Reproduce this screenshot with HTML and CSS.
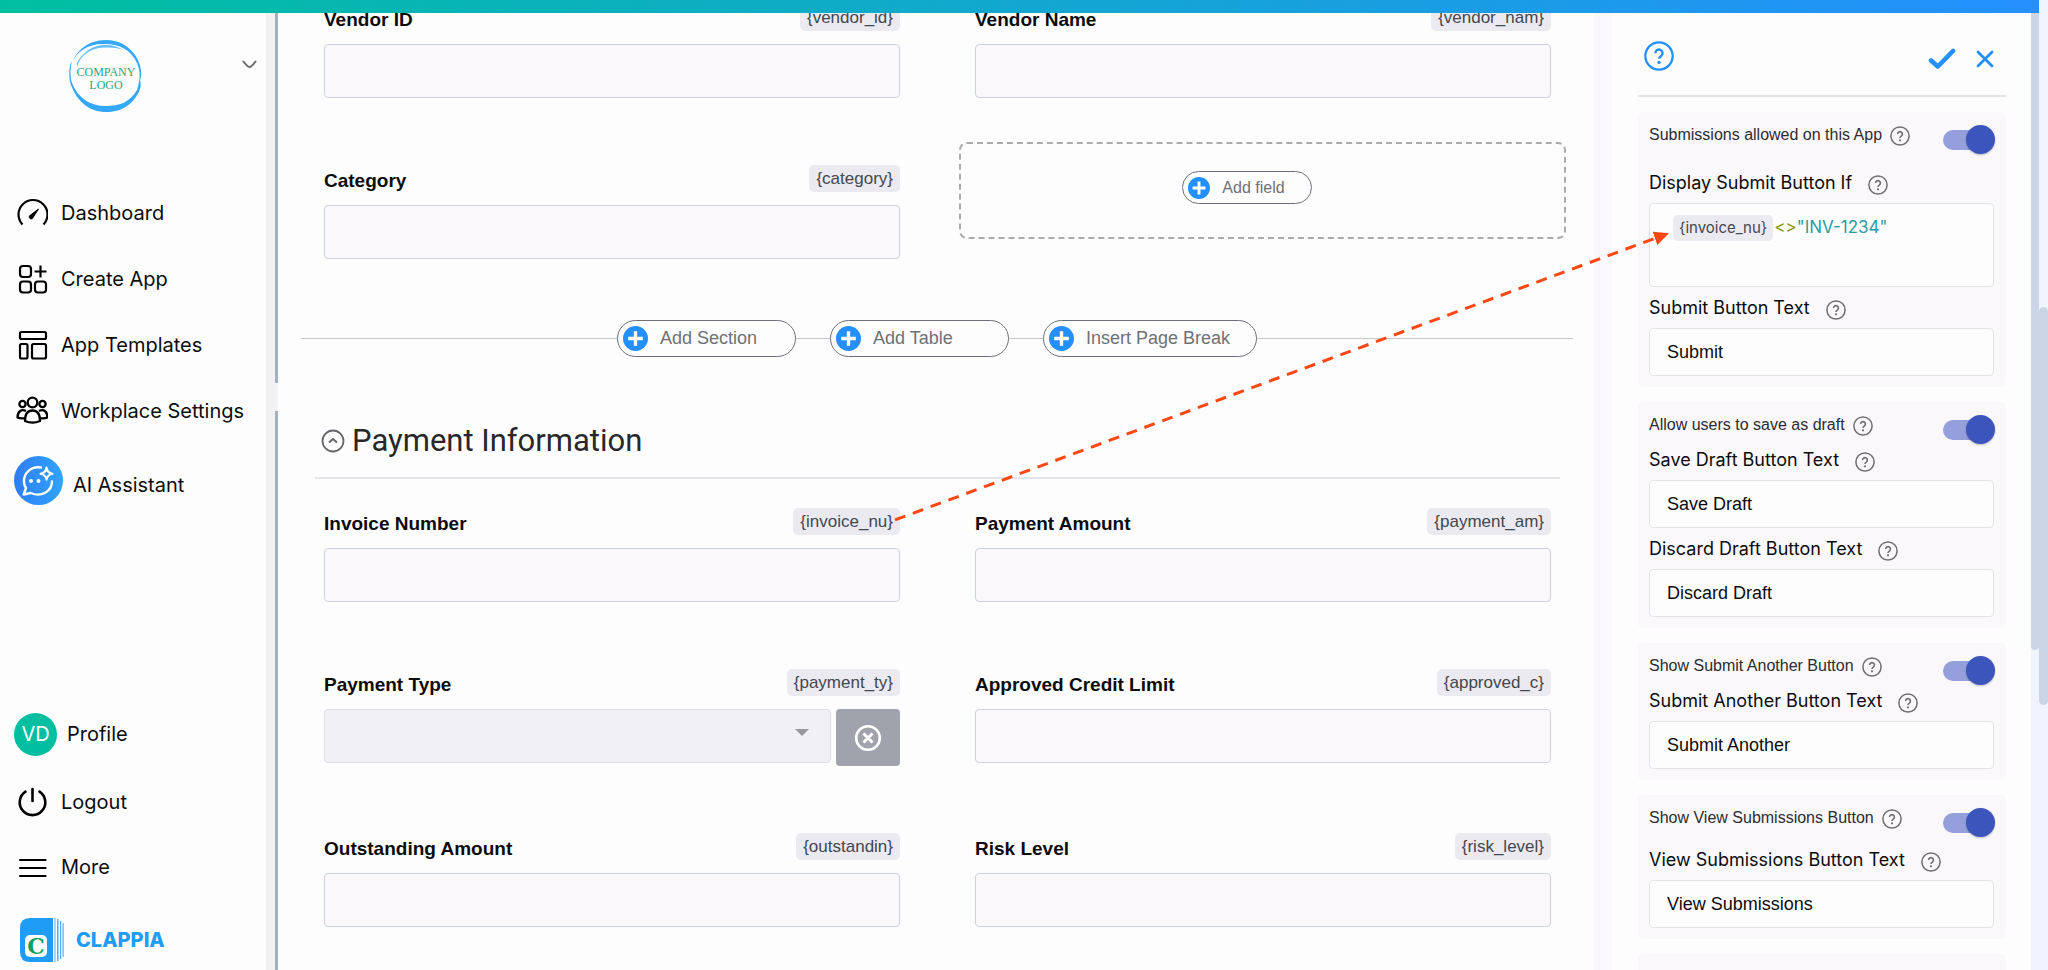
FILE: index.html
```html
<!DOCTYPE html>
<html lang="en">
<head>
    <meta charset="UTF-8">
    <meta name="viewport" content="width=device-width, initial-scale=1.0">
    <title>Clappia - Edit App</title>
    <link rel="stylesheet" href="styles.css">
</head>
<body>
    <!-- shared icons -->
    <svg class="sprite" aria-hidden="true">
        <symbol id="i-help" viewBox="0 0 20 20">
            <circle cx="10" cy="10" r="9.1" fill="none" stroke="currentColor" stroke-width="1.5"/>
            <path d="M7.6 8.1a2.4 2.4 0 1 1 3.7 2c-.9.6-1.3 1-1.3 1.8" fill="none" stroke="currentColor" stroke-width="1.6"/>
            <circle cx="10" cy="14.3" r="1.1" fill="currentColor"/>
        </symbol>
        <symbol id="i-plus" viewBox="0 0 24 24">
            <circle cx="12" cy="12" r="12" fill="#2490ff"/>
            <path d="M12 5v14M5 12h14" fill="none" stroke="#fff" stroke-width="3.2"/>
        </symbol>
    </svg>

    <div class="topbar"></div>

    <div class="app">
        <aside class="sidebar">
            <div class="workspace">
                <svg class="company-logo" width="74" height="74" viewBox="0 0 74 74">
                    <path d="M37 1C18 1 7 13 4 22 8 13 18 5 34 5 48 4 62 10 68 24 72 33 71 42 68 51 60 64 50 67 37 67 21 67 9 59 3 44 1 38 1 30 3 22-1 28 0 41 2 46 8 63 21 73 37 73 52 73 65 66 71 50 72 46 72 44 71 41 74 34 71 25 68 19 61 7 50 1 37 1Z" fill="#34a8fb"/>
                    <path d="M8 24C14 12 26 5 38 6 44 6 50 8 54 11 46 8 34 8 26 10 17 13 11 18 8 28Z" fill="#34a8fb" opacity=".75"/>
                    <text x="37" y="37" text-anchor="middle">COMPANY</text>
                    <text x="37" y="50" text-anchor="middle">LOGO</text>
                </svg>
                <button class="icon-btn workspace-toggle" aria-label="Switch workplace">
                    <svg width="15" height="9" viewBox="0 0 15 9"><path d="M1.5 1.5q4 5.5 6 5.500t6-5.500" fill="none" stroke="#6b6b70" stroke-width="2" stroke-linecap="round"/></svg>
                </button>
            </div>

            <nav class="nav">
                <a class="nav-item" href="#">
                    <svg width="32" height="32" viewBox="0 0 32 32" fill="none" stroke="#000" stroke-width="2">
                        <path d="M6.500 27.500A14.500 14.500 0 1 1 27.500 27.500" stroke-width="2.200"/>
                        <path d="M22.500 12l-5.300 8.300a2 2 0 1 1-2.600-2.300z" fill="#000" stroke-width="1"/>
                    </svg>
                    <span>Dashboard</span>
                </a>
                <a class="nav-item" href="#">
                    <svg width="32" height="32" viewBox="0 0 32 32" fill="none" stroke="#000" stroke-width="2.200">
                        <rect x="4" y="3" width="11" height="11" rx="3"/>
                        <rect x="4" y="18.500" width="11" height="11" rx="3"/>
                        <rect x="19" y="18.500" width="11" height="11" rx="3"/>
                        <path d="M24.500 2.500v12M18.500 8.500h12"/>
                    </svg>
                    <span>Create App</span>
                </a>
                <a class="nav-item" href="#">
                    <svg width="32" height="32" viewBox="0 0 32 32" fill="none" stroke="#000" stroke-width="2.200">
                        <rect x="4" y="3" width="26" height="7" rx="1.500"/>
                        <rect x="4" y="15" width="7.500" height="14.500" rx="1.500"/>
                        <rect x="16" y="15" width="14" height="14.500" rx="1.500"/>
                    </svg>
                    <span>App Templates</span>
                </a>
                <a class="nav-item" href="#">
                    <svg width="32" height="32" viewBox="0 0 32 32" fill="none" stroke="#000" stroke-width="2.300" stroke-linejoin="round">
                        <circle cx="16.500" cy="7.500" r="4.800"/>
                        <circle cx="6.500" cy="9" r="3.100"/>
                        <circle cx="26.500" cy="9" r="3.100"/>
                        <path d="M9 26c0-7 2.500-10.500 7.500-10.500s7.500 3.500 7.500 10.500c-4.500 2-10.500 2-15 0z"/>
                        <path d="M10 16c-5-2.500-8.500 1-8.500 6.500 2 .800 4.500 1 7 .600M23 16c5-2.500 8.500 1 8.500 6.500-2 .800-4.500 1-7 .600"/>
                    </svg>
                    <span>Workplace Settings</span>
                </a>
                <a class="nav-item nav-ai" href="#">
                    <svg width="49" height="49" viewBox="0 0 49 49" fill="none">
                        <defs><linearGradient id="ai" x1="0" x2="1"><stop stop-color="#2f7df6"/><stop offset="1" stop-color="#2fa4fb"/></linearGradient></defs>
                        <circle cx="24.500" cy="24.500" r="24.500" fill="url(#ai)"/>
                        <path d="M27 11.500C17 10 9.500 17 10 26c.1 2 .8 4.300 2 6l-2.300 6.500 7-1.500C27 41.500 38 35.500 38 25.500" stroke="#fff" stroke-width="2.400" stroke-linecap="round" stroke-linejoin="round"/>
                        <path d="M32.500 11.500q.8 5.500 6 6.200-5.200.8-6 6-.8-5.200-6-6 5.200-.7 6-6.200z" stroke="#fff" stroke-width="2" stroke-linejoin="round"/>
                        <circle cx="17" cy="25" r="2" fill="#fff"/>
                        <circle cx="24.500" cy="25" r="2" fill="#fff"/>
                    </svg>
                    <span>AI Assistant</span>
                </a>
            </nav>

            <nav class="nav nav-bottom">
                <a class="nav-item nav-profile" href="#"><b class="avatar">VD</b><span>Profile</span></a>
                <a class="nav-item" href="#">
                    <svg width="32" height="32" viewBox="0 0 32 32" fill="none" stroke="#000" stroke-width="2.600" stroke-linecap="round">
                        <path d="M16.500 3v12M9.500 5.600a12.800 12.800 0 1 0 14 0"/>
                    </svg>
                    <span>Logout</span>
                </a>
                <a class="nav-item nav-more" href="#">
                    <svg width="32" height="32" viewBox="0 0 32 32" fill="none" stroke="#000" stroke-width="2.200" stroke-linecap="round">
                        <path d="M4 9h25.500M4 17h25.500M4 25h25.500"/>
                    </svg>
                    <span>More</span>
                </a>
            </nav>
            <a class="brand" href="#">
                <svg width="44" height="44" viewBox="0 0 44 44">
                    <path d="M10 0H33V44H10Q0 44 0 34V10Q0 0 10 0Z" fill="#1f9cf5"/>
                    <path d="M34.500 0h1v44h-1zM37 1h1.500v42h-1.500zM40 3h1.200v38h-1.200zM42.500 5h1.200v34h-1.200z" fill="#4fb0f7"/>
                    <rect x="5" y="17" width="22" height="22" rx="5" fill="#fff"/>
                    <text x="16" y="36" text-anchor="middle" font-size="22">C</text>
                </svg>
                <span>CLAPPIA</span>
            </a>
        </aside>

        <main class="builder">
            <div class="rail">
                <div class="rail-part rail-top"></div>
                <div class="rail-part rail-rest"></div>
            </div>

            <form class="form">
                <div class="fields">
                    <div class="field">
                        <div class="field-head"><label for="vendor-id">Vendor ID</label><code>{vendor_id}</code></div>
                        <input type="text" id="vendor-id">
                    </div>
                    <div class="field">
                        <div class="field-head"><label for="vendor-name">Vendor Name</label><code>{vendor_nam}</code></div>
                        <input type="text" id="vendor-name">
                    </div>
                    <div class="field">
                        <div class="field-head"><label for="category">Category</label><code>{category}</code></div>
                        <input type="text" id="category">
                    </div>
                    <div class="drop-zone">
                        <button type="button" class="pill pill-small"><svg><use href="#i-plus"/></svg>Add field</button>
                    </div>
                </div>

                <div class="inserts">
                    <button type="button" class="pill"><svg><use href="#i-plus"/></svg>Add Section</button>
                    <button type="button" class="pill"><svg><use href="#i-plus"/></svg>Add Table</button>
                    <button type="button" class="pill"><svg><use href="#i-plus"/></svg>Insert Page Break</button>
                </div>

                <div class="section-head">
                    <button type="button" class="icon-btn" aria-label="Collapse section">
                        <svg width="24" height="24" viewBox="0 0 24 24" fill="none" stroke="#66666b">
                            <circle cx="12" cy="12" r="10.500" stroke-width="1.800"/>
                            <path d="M8 13.500l4-3.500 4 3.500" stroke-width="2"/>
                        </svg>
                    </button>
                    <h2>Payment Information</h2>
                </div>

                <div class="fields">
                    <div class="field">
                        <div class="field-head"><label for="invoice-number">Invoice Number</label><code>{invoice_nu}</code></div>
                        <input type="text" id="invoice-number">
                    </div>
                    <div class="field">
                        <div class="field-head"><label for="payment-amount">Payment Amount</label><code>{payment_am}</code></div>
                        <input type="text" id="payment-amount">
                    </div>
                    <div class="field">
                        <div class="field-head"><label for="payment-type">Payment Type</label><code>{payment_ty}</code></div>
                        <div class="select-row">
                            <div class="select"><select id="payment-type"><option></option></select></div>
                            <button type="button" class="clear-btn" aria-label="Clear selection">
                                <svg width="28" height="28" viewBox="0 0 28 28" fill="none" stroke="#fff" stroke-width="2.600">
                                    <circle cx="14" cy="14" r="11.800"/>
                                    <path d="M9.500 9.500l9 9M18.500 9.500l-9 9" stroke-width="3"/>
                                </svg>
                            </button>
                        </div>
                    </div>
                    <div class="field">
                        <div class="field-head"><label for="credit-limit">Approved Credit Limit</label><code>{approved_c}</code></div>
                        <input type="text" id="credit-limit">
                    </div>
                    <div class="field">
                        <div class="field-head"><label for="outstanding">Outstanding Amount</label><code>{outstandin}</code></div>
                        <input type="text" id="outstanding">
                    </div>
                    <div class="field">
                        <div class="field-head"><label for="risk-level">Risk Level</label><code>{risk_level}</code></div>
                        <input type="text" id="risk-level">
                    </div>
                </div>
            </form>
        </main>

        <aside class="settings">
            <div class="settings-bar">
                <button class="icon-btn" aria-label="Help"><svg width="30" height="30"><use href="#i-help"/></svg></button>
                <div class="settings-actions">
                    <button class="icon-btn" aria-label="Save">
                        <svg width="28" height="22" viewBox="0 0 28 22"><path d="M3 12.500l6.800 6L25 3" fill="none" stroke="#2490ff" stroke-width="4.600" stroke-linecap="round" stroke-linejoin="round"/></svg>
                    </button>
                    <button class="icon-btn" aria-label="Close">
                        <svg width="18" height="18" viewBox="0 0 18 18"><path d="M2 2l14 14M16 2L2 16" fill="none" stroke="#2490ff" stroke-width="2.800" stroke-linecap="round"/></svg>
                    </button>
                </div>
            </div>

            <section class="card">
                <div class="card-head card-head-tall">
                    <label for="allow-submit">Submissions allowed on this App</label>
                    <button class="help" aria-label="Help"><svg><use href="#i-help"/></svg></button>
                    <input type="checkbox" class="toggle" id="allow-submit" checked>
                </div>
                <div class="setting-label">
                    <span id="submit-if">Display Submit Button If</span>
                    <button class="help" aria-label="Help"><svg><use href="#i-help"/></svg></button>
                </div>
                <div class="formula" role="textbox" contenteditable="true" spellcheck="false" aria-labelledby="submit-if"><code>{invoice_nu}</code><span class="op">&lt;&gt;</span><span class="str">"INV-1234"</span></div>
                <div class="setting-label">
                    <label for="submit-text">Submit Button Text</label>
                    <button class="help" aria-label="Help"><svg><use href="#i-help"/></svg></button>
                </div>
                <input type="text" class="setting-input" id="submit-text" value="Submit">
            </section>

            <section class="card">
                <div class="card-head">
                    <label for="allow-draft">Allow users to save as draft</label>
                    <button class="help" aria-label="Help"><svg><use href="#i-help"/></svg></button>
                    <input type="checkbox" class="toggle" id="allow-draft" checked>
                </div>
                <div class="setting-label">
                    <label for="draft-text">Save Draft Button Text</label>
                    <button class="help" aria-label="Help"><svg><use href="#i-help"/></svg></button>
                </div>
                <input type="text" class="setting-input" id="draft-text" value="Save Draft">
                <div class="setting-label">
                    <label for="discard-text">Discard Draft Button Text</label>
                    <button class="help" aria-label="Help"><svg><use href="#i-help"/></svg></button>
                </div>
                <input type="text" class="setting-input" id="discard-text" value="Discard Draft">
            </section>

            <section class="card">
                <div class="card-head">
                    <label for="show-another">Show Submit Another Button</label>
                    <button class="help" aria-label="Help"><svg><use href="#i-help"/></svg></button>
                    <input type="checkbox" class="toggle" id="show-another" checked>
                </div>
                <div class="setting-label">
                    <label for="another-text">Submit Another Button Text</label>
                    <button class="help" aria-label="Help"><svg><use href="#i-help"/></svg></button>
                </div>
                <input type="text" class="setting-input" id="another-text" value="Submit Another">
            </section>

            <section class="card">
                <div class="card-head card-head-mid">
                    <label for="show-view">Show View Submissions Button</label>
                    <button class="help" aria-label="Help"><svg><use href="#i-help"/></svg></button>
                    <input type="checkbox" class="toggle" id="show-view" checked>
                </div>
                <div class="setting-label">
                    <label for="view-text">View Submissions Button Text</label>
                    <button class="help" aria-label="Help"><svg><use href="#i-help"/></svg></button>
                </div>
                <input type="text" class="setting-input" id="view-text" value="View Submissions">
            </section>

            <section class="card card-next"></section>
        </aside>

        <div class="scrollbar"><div class="thumb thumb-settings"></div></div>
        <div class="scrollbar"><div class="thumb thumb-page"></div></div>
    </div>

    <!-- link from the field variable to the condition -->
    <svg class="connector" aria-hidden="true">
        <defs>
            <marker id="arrow" markerUnits="userSpaceOnUse" markerWidth="16" markerHeight="14" refX="2" refY="7" orient="auto">
                <path d="M0 0L15 7L0 14Z" fill="#ff4713"/>
            </marker>
        </defs>
        <line x1="43.700%" y1="53.600%" x2="80.900%" y2="24.500%" marker-end="url(#arrow)"/>
    </svg>
</body>
</html>
```

FILE: styles.css
```css
* {
    box-sizing: border-box;
}

body {
    margin: 0;
    height: 100vh;
    overflow: hidden;
    background-color: #fefdfe;
    color: #0c0c0e;
    font-family: "Liberation Sans", Arial, sans-serif;
    font-size: 18px;
}

.sprite {
    display: none;
}

button,
input,
select {
    font: inherit;
    color: inherit;
}

button {
    cursor: pointer;
}

.icon-btn,
.help {
    display: flex;
    padding: 0;
    border: none;
    background: none;
}

.topbar {
    position: absolute;
    top: 0;
    left: 0;
    right: 9px;
    height: 13px;
    background: linear-gradient(90deg, #00bfa0, #2490ff);
    z-index: 2;
}

.app {
    display: flex;
    height: 100%;
}

/* sidebar */
.sidebar {
    display: flex;
    flex-direction: column;
    flex: none;
    width: 275px;
    border-right: 9px solid #f1f0f3;
    font-family: Inter, sans-serif;
    font-size: 20px;
}

.workspace {
    display: flex;
    justify-content: space-between;
    align-items: flex-start;
    height: 180px;
    padding: 39px 9px 0 69px;
}

.workspace-toggle {
    margin-top: 21px;
}

.company-logo text {
    font-family: "Liberation Serif", serif;
    font-size: 12px;
    fill: #2aa876;
}

.nav-item {
    display: flex;
    align-items: center;
    gap: 13px;
    height: 66px;
    padding-left: 16px;
    color: #0c0c0e;
    text-decoration: none;
}

.nav-ai {
    height: 73px;
    gap: 10px;
    padding-left: 14px;
}

.nav-ai span {
    padding-top: 9px;
}

.nav-bottom {
    margin-top: auto;
}

.nav-bottom .nav-item {
    height: 68px;
}

.nav-bottom .nav-more {
    height: 62px;
}

.nav-profile {
    gap: 10px;
    padding-left: 14px;
}

.avatar {
    width: 43px;
    height: 43px;
    border-radius: 50%;
    background-color: #00bfa0;
    color: #fff;
    font-weight: normal;
    line-height: 43px;
    text-align: center;
}

.brand {
    display: flex;
    align-items: center;
    gap: 12px;
    padding: 20px 0 8px 20px;
    color: #1f9cf5;
    font-weight: 800;
    font-size: 20px;
    text-decoration: none;
}

.brand text {
    font-family: "DejaVu Serif", serif;
    font-weight: bold;
    fill: #0da05f;
}

/* form builder */
.builder {
    display: flex;
    flex: 1;
    min-width: 0;
    border-right: 18px solid #faf8fc;
}

.rail {
    display: flex;
    flex-direction: column;
    gap: 28px;
    width: 3px;
    background-color: #f6f4f9;
}

.rail-part {
    background-color: #a3b1c0;
}

.rail-top {
    height: 383px;
}

.rail-rest {
    flex: 1;
}

.form {
    flex: 1;
    padding: 4px 21px 0 23px;
}

.fields {
    display: grid;
    grid-template-columns: 1fr 1fr;
    gap: 67px 75px;
    padding: 0 22px 0 23px;
}

.field-head {
    display: flex;
    justify-content: space-between;
    align-items: flex-end;
    height: 27px;
    margin-bottom: 13px;
}

.field-head label {
    font-size: 19px;
    font-weight: bold;
    line-height: 22px;
}

code {
    padding: 0 7px;
    border-radius: 5px;
    background-color: #ebeaf1;
    color: #43474f;
    font-family: "Liberation Sans", Arial, sans-serif;
    font-size: 17px;
    line-height: 27px;
}

.field input,
.field select {
    display: block;
    width: 100%;
    height: 54px;
    padding: 0 16px;
    border: 1px solid #cdd2df;
    border-radius: 4px;
    background-color: #faf8fb;
}

.select-row {
    display: flex;
    gap: 5px;
}

.select {
    position: relative;
    flex: 1;
}

.select::after {
    content: "";
    position: absolute;
    top: 20px;
    right: 22px;
    border: 7px solid transparent;
    border-top-color: #97979c;
    border-bottom: none;
    pointer-events: none;
}

.field .select select {
    appearance: none;
    border-color: #dde0ea;
    background-color: #f1f0f4;
}

.clear-btn {
    display: flex;
    align-items: center;
    justify-content: center;
    width: 64px;
    height: 57px;
    border: none;
    border-radius: 4px;
    background-color: #a0a3ab;
}

.drop-zone {
    display: flex;
    align-items: center;
    justify-content: center;
    height: 97px;
    margin: -23px -15px 0 -16px;
    padding: 0 31px 6px 0;
    border: 2px dashed #ababae;
    border-radius: 8px;
}

.pill {
    display: flex;
    align-items: center;
    gap: 12px;
    min-width: 179px;
    height: 37px;
    padding: 0 26px 0 5px;
    border: 1px solid #6d7177;
    border-radius: 19px;
    background-color: #fefdfe;
    color: #6d7177;
}

.pill svg {
    width: 25px;
    height: 25px;
}

.pill-small {
    min-width: 128px;
    height: 33px;
    padding-right: 26px;
    font-size: 16px;
}

.pill-small svg {
    width: 22px;
    height: 22px;
}

.inserts {
    display: flex;
    justify-content: center;
    gap: 34px;
    margin-top: 61px;
    background: linear-gradient(#c6c6ca, #c6c6ca) center / 100% 1px no-repeat;
}

.section-head {
    display: flex;
    align-items: center;
    gap: 7px;
    margin: 63px 13px 29px 14px;
    padding: 0 0 15px 6px;
    border-bottom: 2px solid #e5e4e8;
}

.section-head h2 {
    margin: 0;
    color: #28282b;
    font-family: Roboto, sans-serif;
    font-size: 31px;
    font-weight: normal;
    line-height: 42px;
}

/* settings panel */
.settings {
    flex: none;
    width: 419px;
    padding: 13px 25px 0 26px;
    overflow: hidden;
}

.settings-bar {
    display: flex;
    justify-content: space-between;
    height: 84px;
    margin-bottom: 15px;
    padding: 28px 12px 0 6px;
    border-bottom: 2px solid #e5e4e8;
    color: #2490ff;
}

.settings-actions {
    display: flex;
    align-items: center;
    gap: 20px;
    height: 36px;
}

.card {
    margin-bottom: 15px;
    padding: 0 12px 11px 11px;
    border-radius: 5px;
    background-color: #faf8fb;
}

.card-next {
    height: 60px;
}

.card-head {
    display: flex;
    align-items: flex-start;
    gap: 8px;
    height: 37px;
    padding-top: 11px;
    color: #2c2c30;
    font-size: 16px;
    line-height: 24px;
}

.card-head-tall {
    height: 50px;
}

.card-head-mid {
    height: 44px;
}

.card-head .help {
    margin-top: 3px;
}

.setting-label {
    display: flex;
    align-items: center;
    gap: 16px;
    height: 41px;
    font-family: Inter, sans-serif;
    font-size: 18px;
}

.setting-label .help {
    margin-top: 4px;
}

.help {
    color: #6e6e73;
}

.help svg {
    width: 20px;
    height: 20px;
}

.toggle {
    position: relative;
    appearance: none;
    width: 48px;
    height: 20px;
    margin: 7px 3px 0 auto;
    border-radius: 10px;
    background-color: #949fdb;
    cursor: pointer;
}

.toggle::after {
    content: "";
    position: absolute;
    top: -5px;
    right: -4px;
    width: 29px;
    height: 29px;
    border-radius: 50%;
    background-color: #3b55bd;
    box-shadow: 0 1px 2px rgba(0, 0, 0, 0.25);
}

.toggle:not(:checked)::after {
    right: 23px;
    background-color: #fff;
}

.setting-input {
    display: block;
    width: 100%;
    height: 48px;
    padding: 0 17px;
    border: 1px solid #e4e3e8;
    border-radius: 4px;
    background-color: #fefdfe;
}

.formula {
    height: 84px;
    padding: 10px 23px;
    border: 1px solid #e4e3e8;
    border-radius: 4px;
    background-color: #fefdfe;
    font-family: Inter, sans-serif;
    font-size: 17px;
    line-height: 26px;
}

.formula code {
    display: inline-block;
    margin-right: 1px;
    padding: 0 6px;
    font-family: Inter, sans-serif;
    font-size: 15px;
    line-height: 26px;
}

.op {
    color: #8a9a0a;
}

.str {
    color: #2a9da0;
}

/* scrollbars */
.scrollbar {
    flex: none;
    width: 8px;
    background-color: #f0f4fe;
}

.scrollbar:last-child {
    width: 9px;
}

.thumb {
    border-radius: 5px;
    background-color: #cbd5e5;
}

.thumb-settings {
    height: 67%;
}

.thumb-page {
    height: 41%;
    margin-top: 307px;
}

.connector {
    position: absolute;
    inset: 0;
    width: 100%;
    height: 100%;
    pointer-events: none;
}

.connector line {
    stroke: #ff4713;
    stroke-width: 3;
    stroke-dasharray: 11 8;
}
```
